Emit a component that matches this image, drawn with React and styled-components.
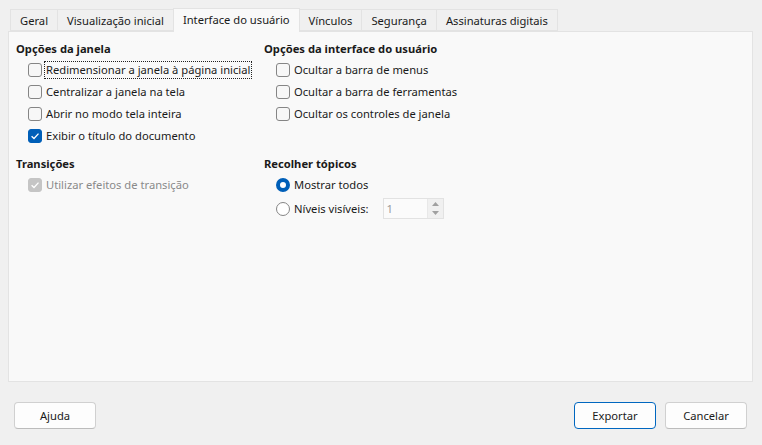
import React from "react";
import styled, { createGlobalStyle } from "styled-components";

const Global = createGlobalStyle`
  html, body { margin: 0; padding: 0; background: #f0f0f0; }
  body { font-family: "Noto Sans", "Open Sans", sans-serif; font-size: 11.2px; color: #1a1a1a; }
  * { box-sizing: border-box; }
`;

const Window = styled.div`
  width: 762px;
  height: 445px;
  background: #f0f0f0;
  display: flex;
  flex-direction: column;
  padding: 8px 9px 0 8px;
`;

const TabBar = styled.div`
  display: flex;
  align-items: flex-end;
  height: 23px;
  padding-left: 3px;
  position: relative;
  z-index: 1;
`;

const Tab = styled.div`
  height: ${p => (p.$active ? "24px" : "22px")};
  margin-bottom: ${p => (p.$active ? "-1px" : "0")};
  padding: 0 9px;
  display: flex;
  align-items: center;
  background: ${p => (p.$active ? "#f9f9f9" : "#f0f0f0")};
  border: 1px solid #e3e3e3;
  border-bottom: ${p => (p.$active ? "none" : "1px solid #e3e3e3")};
  margin-left: -1px;
  white-space: nowrap;
  color: #1a1a1a;
  padding-bottom: ${p => (p.$active ? "2px" : "0")};
`;

const Panel = styled.div`
  height: 351px;
  background: #f9f9f9;
  border: 1px solid #e3e3e3;
  display: grid;
  grid-template-columns: 248px 1fr;
  align-content: start;
  padding: 7px 0 0 7px;
`;

const Section = styled.div`
  display: flex;
  flex-direction: column;
  margin-bottom: ${p => p.$mb || 0}px;
`;

const Heading = styled.div`
  font-weight: 700;
  height: 20px;
  line-height: 20px;
`;

const Row = styled.label`
  display: flex;
  align-items: center;
  height: ${p => p.$h || 22}px;
  padding-left: 12px;
  color: ${p => (p.$disabled ? "#8a8a8a" : "#1a1a1a")};
  white-space: nowrap;
`;

const Box = styled.span`
  width: 14px;
  height: 14px;
  border-radius: 3px;
  border: 1px solid ${p => (p.$checked ? (p.$disabled ? "#c5c5c5" : "#005fb8") : "#858585")};
  background: ${p => (p.$checked ? (p.$disabled ? "#c5c5c5" : "#005fb8") : "#f7f7f7")};
  display: flex;
  align-items: center;
  justify-content: center;
  margin-right: 2px;
  flex: none;
`;

const Radio = styled.span`
  width: 14px;
  height: 14px;
  border-radius: 50%;
  border: ${p => (p.$checked ? "4px solid #005fb8" : "1px solid #858585")};
  background: #fff;
  margin-right: 2px;
  flex: none;
`;

const Label = styled.span`
  padding: 0 1px;
  border: 1px ${p => (p.$focus ? "dotted #222" : "solid transparent")};
  line-height: 16px;
`;

const Spin = styled.div`
  margin-left: 12px;
  width: 61px;
  height: 21px;
  border: 1px solid #e2e2e2;
  background: #fbfbfb;
  display: flex;
  align-items: center;
  justify-content: space-between;
  padding-left: 3px;
  color: #9a9a9a;
`;

const SpinArrows = styled.div`
  width: 16px;
  height: 19px;
  display: flex;
  flex-direction: column;
  background: #f0f0f0;
  border-left: 1px solid #e8e8e8;
`;

const Arrow = styled.div`
  flex: 1;
  display: flex;
  align-items: center;
  justify-content: center;
`;

const Footer = styled.div`
  flex: 1;
  display: flex;
  align-items: center;
  justify-content: space-between;
  padding: 4px 6px 0 6px;
`;

const Group = styled.div`
  display: flex;
  gap: 9px;
`;

const Button = styled.button`
  width: 82px;
  height: 27px;
  font: inherit;
  color: #1a1a1a;
  background: #fdfdfd;
  border: 1px solid ${p => (p.$primary ? "#0067c0" : "#d0d0d0")};
  border-bottom-color: ${p => (p.$primary ? "#0067c0" : "#bcbcbc")};
  border-radius: 4px;
  padding: 0 0 1px;
`;

const Check = () => (
  <svg width="10" height="10" viewBox="0 0 10 10">
    <path d="M1.6 5.2 L4 7.5 L8.5 2.6" fill="none" stroke="#fff" strokeWidth="1.3" />
  </svg>
);

const CB = ({ checked, disabled, children, focus }) => (
  <Row $disabled={disabled}>
    <Box $checked={checked} $disabled={disabled}>{checked && <Check />}</Box>
    <Label $focus={focus}>{children}</Label>
  </Row>
);

const Tri = ({ up }) => (
  <svg width="7" height="4" viewBox="0 0 7 4">
    <path d={up ? "M0 4 L3.5 0 L7 4Z" : "M0 0 L3.5 4 L7 0Z"} fill="#a0a0a0" />
  </svg>
);

export default function App() {
  return (
    <Window>
      <Global />
      <TabBar>
        <Tab>Geral</Tab>
        <Tab>Visualização inicial</Tab>
        <Tab $active>Interface do usuário</Tab>
        <Tab>Vínculos</Tab>
        <Tab>Segurança</Tab>
        <Tab>Assinaturas digitais</Tab>
      </TabBar>
      <Panel>
        <Section $mb={7}>
          <Heading>Opções da janela</Heading>
          <CB focus>Redimensionar a janela à página inicial</CB>
          <CB>Centralizar a janela na tela</CB>
          <CB>Abrir no modo tela inteira</CB>
          <CB checked>Exibir o título do documento</CB>
        </Section>
        <Section>
          <Heading>Opções da interface do usuário</Heading>
          <CB>Ocultar a barra de menus</CB>
          <CB>Ocultar a barra de ferramentas</CB>
          <CB>Ocultar os controles de janela</CB>
        </Section>
        <Section>
          <Heading>Transições</Heading>
          <CB checked disabled>Utilizar efeitos de transição</CB>
        </Section>
        <Section>
          <Heading>Recolher tópicos</Heading>
          <Row>
            <Radio $checked />
            <Label>Mostrar todos</Label>
          </Row>
          <Row $h={25}>
            <Radio />
            <Label>Níveis visíveis:</Label>
            <Spin>
              1
              <SpinArrows>
                <Arrow><Tri up /></Arrow>
                <Arrow><Tri /></Arrow>
              </SpinArrows>
            </Spin>
          </Row>
        </Section>
      </Panel>
      <Footer>
        <Button>Ajuda</Button>
        <Group>
          <Button $primary>Exportar</Button>
          <Button>Cancelar</Button>
        </Group>
      </Footer>
    </Window>
  );
}
